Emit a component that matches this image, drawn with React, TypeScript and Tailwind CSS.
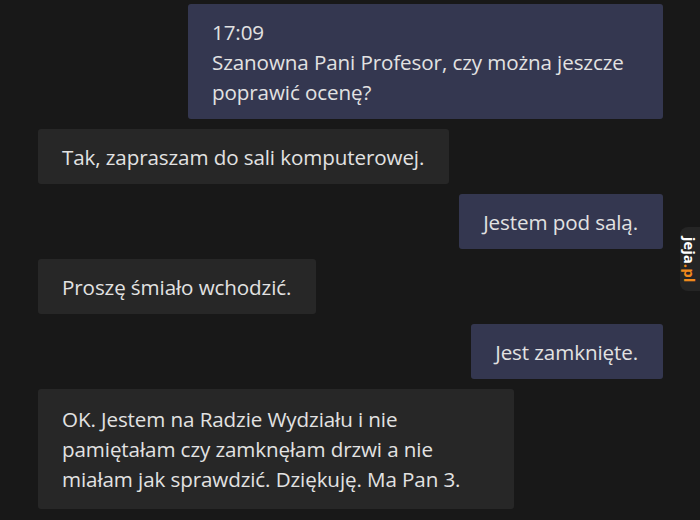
const font = { fontFamily: '"Open Sans", "Noto Sans", sans-serif' };

type Msg = { me: boolean; text: string; time?: string; width?: string; pad?: string };

const messages: Msg[] = [
  {
    me: true,
    time: '17:09',
    text: 'Szanowna Pani Profesor, czy można jeszcze poprawić ocenę?',
    width: 'w-[475px]',
  },
  { me: false, text: 'Tak, zapraszam do sali komputerowej.' },
  { me: true, text: 'Jestem pod salą.' },
  { me: false, text: 'Proszę śmiało wchodzić.' },
  { me: true, text: 'Jest zamknięte.' },
  {
    me: false,
    text: 'OK. Jestem na Radzie Wydziału i nie pamiętałam czy zamknęłam drzwi a nie miałam jak sprawdzić. Dziękuję. Ma Pan 3.',
    width: 'w-[476px]',
    pad: 'py-[15px]',
  },
];

function Bubble({ msg }: { msg: Msg }) {
  return (
    <div className={msg.me ? 'flex justify-end' : 'flex justify-start'}>
      <div
        className={`${msg.width ?? ''} ${msg.pad ?? 'py-[12.5px]'} rounded-[3px] pl-[24px] pr-[25px] text-[20.6px] leading-[30px] tracking-[-0.1px] text-[#e2e2e2] ${
          msg.me ? 'bg-[#343750]' : 'bg-[#272727]'
        }`}
      >
        {msg.time && <div>{msg.time}</div>}
        <div>{msg.text}</div>
      </div>
    </div>
  );
}

export default function App() {
  return (
    <div
      className="relative h-[520px] w-[700px] overflow-hidden bg-[#181818]"
      style={font}
    >
      <div className="flex flex-col gap-[10px] pl-[38px] pr-[37px] pt-[4px]">
        {messages.map((m, i) => (
          <Bubble key={i} msg={m} />
        ))}
      </div>

      {/* jeja.pl watermark */}
      <div className="absolute right-0 top-[227px] flex h-[64px] w-[20px] items-center justify-center rounded-l-[8px] bg-[#252525]">
        <div className="rotate-90 whitespace-nowrap text-[15px] font-bold leading-none">
          <span className="text-white">jeja</span>
          <span className="text-[#f08a1c]">.pl</span>
        </div>
      </div>
    </div>
  );
}
